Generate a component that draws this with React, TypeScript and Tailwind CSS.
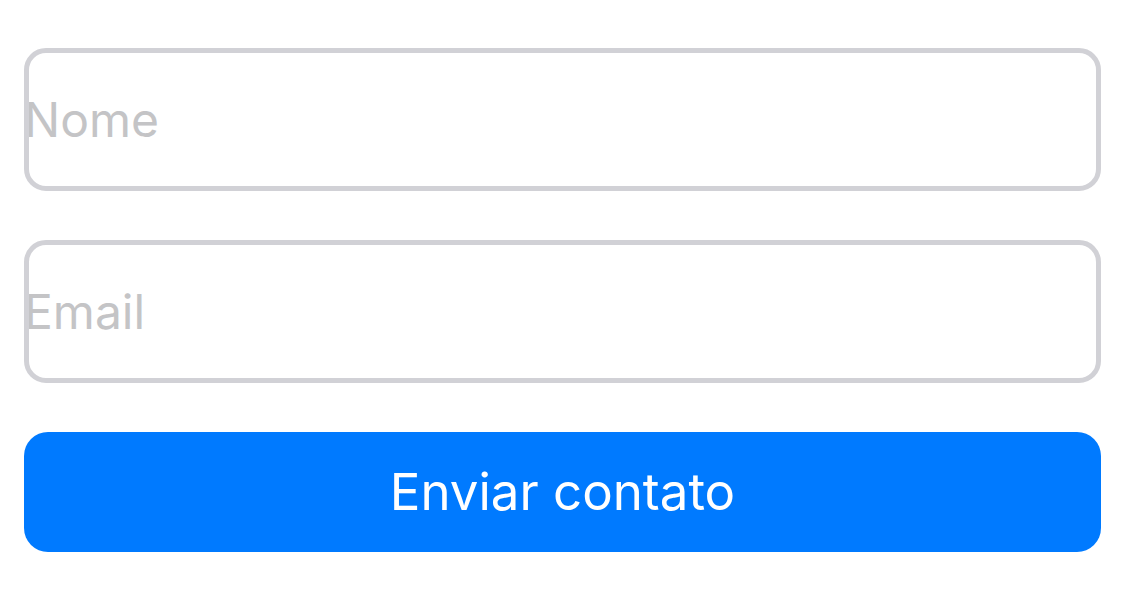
import React from "react";

const fieldClass =
  "w-full h-[143px] rounded-[22px] border-[5px] border-[#d1d1d6] bg-white p-0 text-[48px] text-gray-900 placeholder:text-[#c4c4c6] outline-none -indent-[5px]";

export default function App() {
  return (
    <div
      className="w-[1125px] h-[600px] bg-white px-6 pt-12 flex flex-col"
      style={{ fontFamily: "Inter, 'Liberation Sans', sans-serif" }}
    >
      <div className="flex flex-col gap-[49px]">
        <input type="text" placeholder="Nome" className={fieldClass} />
        <input type="email" placeholder="Email" className={fieldClass} />
      </div>
      <button className="mt-[49px] h-[120px] w-full rounded-[24px] bg-[#007aff] text-white text-[51px]">
        Enviar contato
      </button>
    </div>
  );
}
